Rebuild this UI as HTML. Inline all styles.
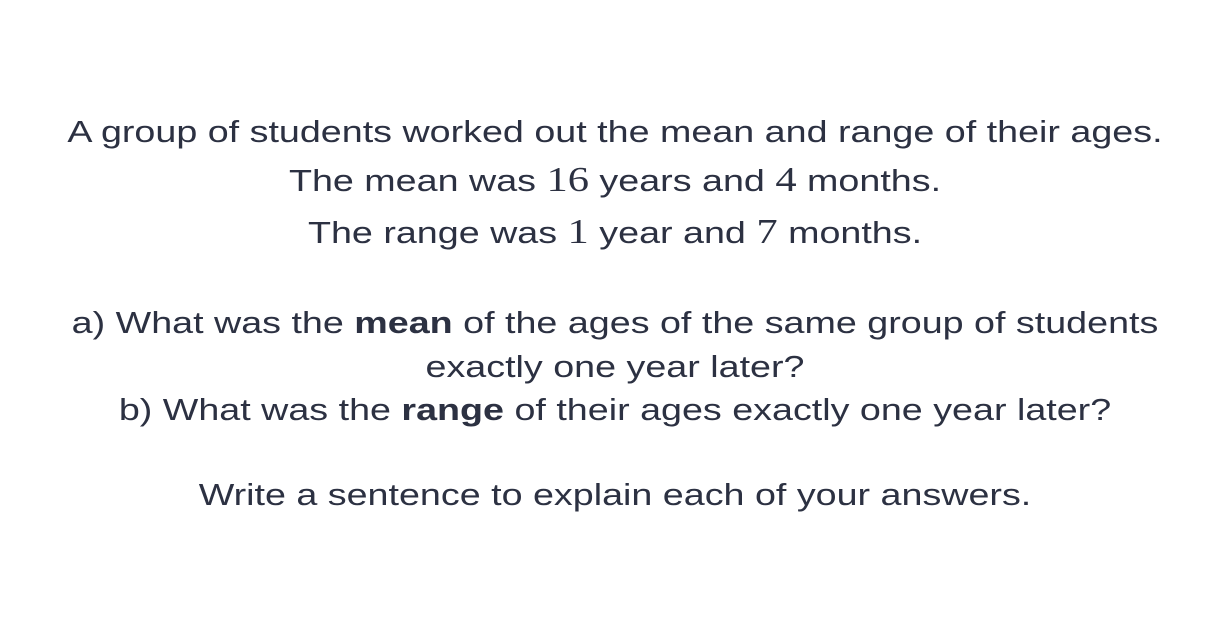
<!DOCTYPE html>
<html><head><meta charset="utf-8"><style>
html,body{margin:0;padding:0;background:#fff;width:1230px;height:633px;overflow:hidden}
.l{position:absolute;left:0;width:1230px;text-align:center;font-family:"Liberation Sans",sans-serif;font-size:31px;line-height:36px;color:#2c3142;white-space:nowrap;transform:scaleX(1.215);transform-origin:615px 0}
.n{font-family:"Liberation Serif",serif;font-size:35px}
b{font-weight:bold}
</style></head><body>
<div class="l" style="top:114px">A group of students worked out the mean and range of their ages.</div>
<div class="l" style="top:162px">The mean was <span class="n">16</span> years and <span class="n">4</span> months.</div>
<div class="l" style="top:214px">The range was <span class="n">1</span> year and <span class="n">7</span> months.</div>
<div class="l" style="top:305px">a) What was the <b>mean</b> of the ages of the same group of students</div>
<div class="l" style="top:349px">exactly one year later?</div>
<div class="l" style="top:392px">b) What was the <b>range</b> of their ages exactly one year later?</div>
<div class="l" style="top:477px">Write a sentence to explain each of your answers.</div>
</body></html>
